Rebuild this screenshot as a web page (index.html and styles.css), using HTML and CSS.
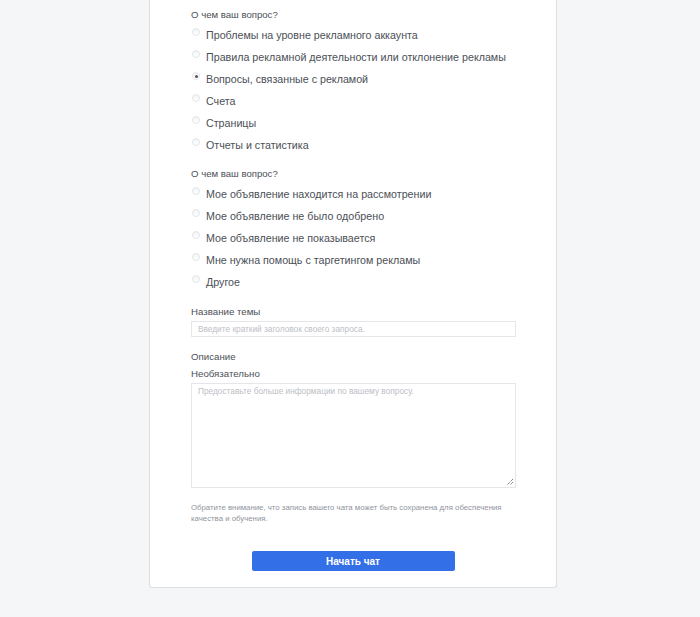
FILE: index.html
```html
<!DOCTYPE html>
<html lang="ru">
<head>
<meta charset="utf-8">
<link rel="stylesheet" href="styles.css">
</head>
<body>
<div class="card">
  <div class="group">
    <div class="label">О чем ваш вопрос?</div>
    <label class="opt"><span class="radio"></span>Проблемы на уровне рекламного аккаунта</label>
    <label class="opt"><span class="radio"></span>Правила рекламной деятельности или отклонение рекламы</label>
    <label class="opt"><span class="radio checked"></span>Вопросы, связанные с рекламой</label>
    <label class="opt"><span class="radio"></span>Счета</label>
    <label class="opt"><span class="radio"></span>Страницы</label>
    <label class="opt"><span class="radio"></span>Отчеты и статистика</label>
  </div>
  <div class="group">
    <div class="label">О чем ваш вопрос?</div>
    <label class="opt"><span class="radio"></span>Мое объявление находится на рассмотрении</label>
    <label class="opt"><span class="radio"></span>Мое объявление не было одобрено</label>
    <label class="opt"><span class="radio"></span>Мое объявление не показывается</label>
    <label class="opt"><span class="radio"></span>Мне нужна помощь с таргетингом рекламы</label>
    <label class="opt"><span class="radio"></span>Другое</label>
  </div>
  <div class="field">
    <div class="flabel">Название темы</div>
    <div class="input">Введите краткий заголовок своего запроса.</div>
  </div>
  <div class="field desc">
    <div class="flabel">Описание</div>
    <div class="flabel sub">Необязательно</div>
    <div class="textarea">Предоставьте больше информации по вашему вопросу.
      <svg class="grip" width="8" height="8" viewBox="0 0 8 8"><path d="M7 1 L1 7 M7 4 L4 7" stroke="#555" stroke-width="1" stroke-dasharray="1 1"/></svg>
    </div>
  </div>
  <p class="note">Обратите внимание, что запись вашего чата может быть сохранена для обеспечения качества и обучения.</p>
  <div class="actions"><button class="btn">Начать чат</button></div>
</div>
</body>
</html>
```
FILE: styles.css
```css
html, body { margin: 0; padding: 0; }
body {
  background: #f5f6f7;
  font-family: "Liberation Sans", Arial, sans-serif;
  color: #4b4f56;
  height: 617px;
  overflow: hidden;
}
.card {
  margin-left: 149px;
  width: 324px;
  background: #fff;
  border: 1px solid #dddfe2;
  border-top: none;
  border-radius: 0 0 3px 3px;
  padding: 8px 41px 16px 41px;
}
.label {
  font-size: 9.6px;
  color: #4b4f56;
  line-height: 14px;
  margin-bottom: 2px;
}
.group + .group { margin-top: 11px; }
.opt {
  display: flex;
  align-items: center;
  font-size: 10.7px;
  line-height: 22px;
  height: 22px;
  color: #4b4f56;
}
.radio {
  width: 8px;
  height: 8px;
  border-radius: 50%;
  border: 1px solid #e3e5e8;
  background: linear-gradient(#f3f4f5, #fff);
  box-sizing: border-box;
  margin: 0 6px 0 1px;
  position: relative;
  top: -3px;
  flex: none;
}
.radio.checked::after {
  content: "";
  position: absolute;
  left: 2px; top: 2px;
  width: 3px; height: 3px;
  border-radius: 50%;
  background: #555;
}
.field { margin-top: 12px; }
.flabel {
  font-size: 9.7px;
  line-height: 14px;
  color: #4b4f56;
}
.input {
  margin-top: 2px;
  height: 16px;
  border: 1px solid #e5e6e9;
  box-sizing: border-box;
  width: 325px;
  font-size: 8.3px;
  line-height: 14px;
  padding-left: 6px;
  color: #bcc0c6;
}
.desc { margin-top: 13px; }
.flabel.sub { margin-top: 3px; }
.textarea {
  margin-top: 2px;
  position: relative;
  height: 105px;
  width: 325px;
  box-sizing: border-box;
  border: 1px solid #e5e6e9;
  font-size: 8.3px;
  line-height: 14px;
  padding-left: 6px;
  color: #bcc0c6;
}
.grip { position: absolute; right: 1px; bottom: 1px; }
.note {
  margin: 14px 0 0;
  font-size: 7.8px;
  line-height: 11px;
  color: #90949c;
}
.actions {
  display: flex;
  justify-content: center;
  margin-top: 27px;
}
.btn {
  width: 203px;
  height: 20px;
  border: none;
  border-radius: 2px;
  background: #3370e8;
  color: #fff;
  font-family: "Liberation Sans", Arial, sans-serif;
  font-weight: bold;
  font-size: 10px;
  padding: 0;
}
```
